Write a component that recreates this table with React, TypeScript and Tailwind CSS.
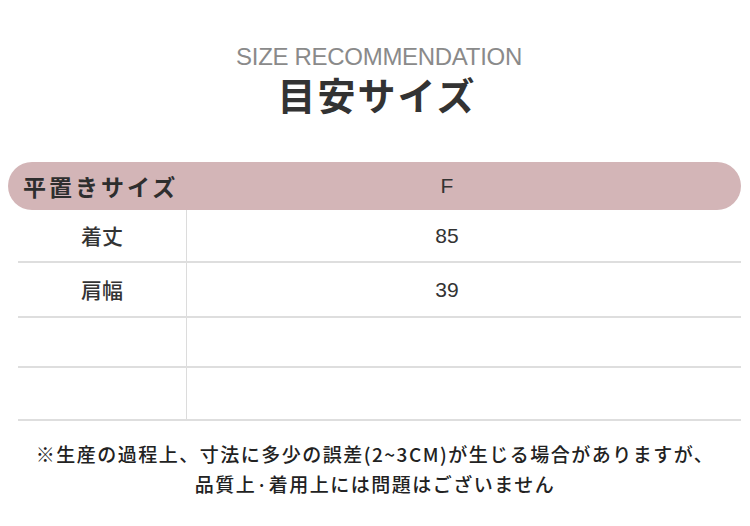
const jp = "font-['Noto_Sans_CJK_JP','Noto_Sans',sans-serif]";
const latin = "font-['Liberation_Sans','Noto_Sans_CJK_JP',sans-serif]";

const rows = [
  { label: "着丈", value: "85", h: "h-[53px]" },
  { label: "肩幅", value: "39", h: "h-[55px]" },
  { label: "", value: "", h: "h-[50px]" },
  { label: "", value: "", h: "h-[53px]" },
];

export default function App() {
  return (
    <div className="w-[750px] h-[526px] bg-white overflow-hidden">
      <div className="flex flex-col items-center pt-[45px]">
        <div className={`${latin} text-[24px] leading-[24px] tracking-[-0.3px] text-[#8a8a8a] pl-[8px]`}>
          SIZE RECOMMENDATION
        </div>
        <div className={`${jp} text-[38px] leading-[38px] font-bold tracking-[2px] text-[#333333] mt-[6px] pl-[4px]`}>
          目安サイズ
        </div>
      </div>

      <div className="mt-[49px] ml-[8px] w-[733px]">
        <div className="flex items-center h-[48px] rounded-full bg-[#d3b5b7]">
          <div className={`${jp} w-[179px] pl-[15px] text-[23px] font-bold tracking-[3px] text-[#2e2e2e]`}>
            平置きサイズ
          </div>
          <div className={`${latin} flex-1 text-center pr-[34px] text-[21px] text-[#333333]`}>F</div>
        </div>

        <div className="ml-[10px]">
          {rows.map((r, i) => (
            <div key={i} className={`grid grid-cols-[169px_1fr] border-b-2 border-[#dedede] ${r.h}`}>
              <div className={`${jp} flex items-center justify-center border-r border-[#dcdcdc] text-[21px] font-medium text-[#333333]`}>
                {r.label}
              </div>
              <div className={`${latin} flex items-center justify-center pr-[34px] text-[21px] text-[#333333]`}>
                {r.value}
              </div>
            </div>
          ))}
        </div>
      </div>

      <div className={`${jp} mt-[18px] text-center text-[19px] leading-[30px] font-medium tracking-[1.5px] text-[#222222]`}>
        <div>※生産の過程上、寸法に多少の誤差(2~3CM)が生じる場合がありますが、</div>
        <div>品質上·着用上には問題はございません</div>
      </div>
    </div>
  );
}
